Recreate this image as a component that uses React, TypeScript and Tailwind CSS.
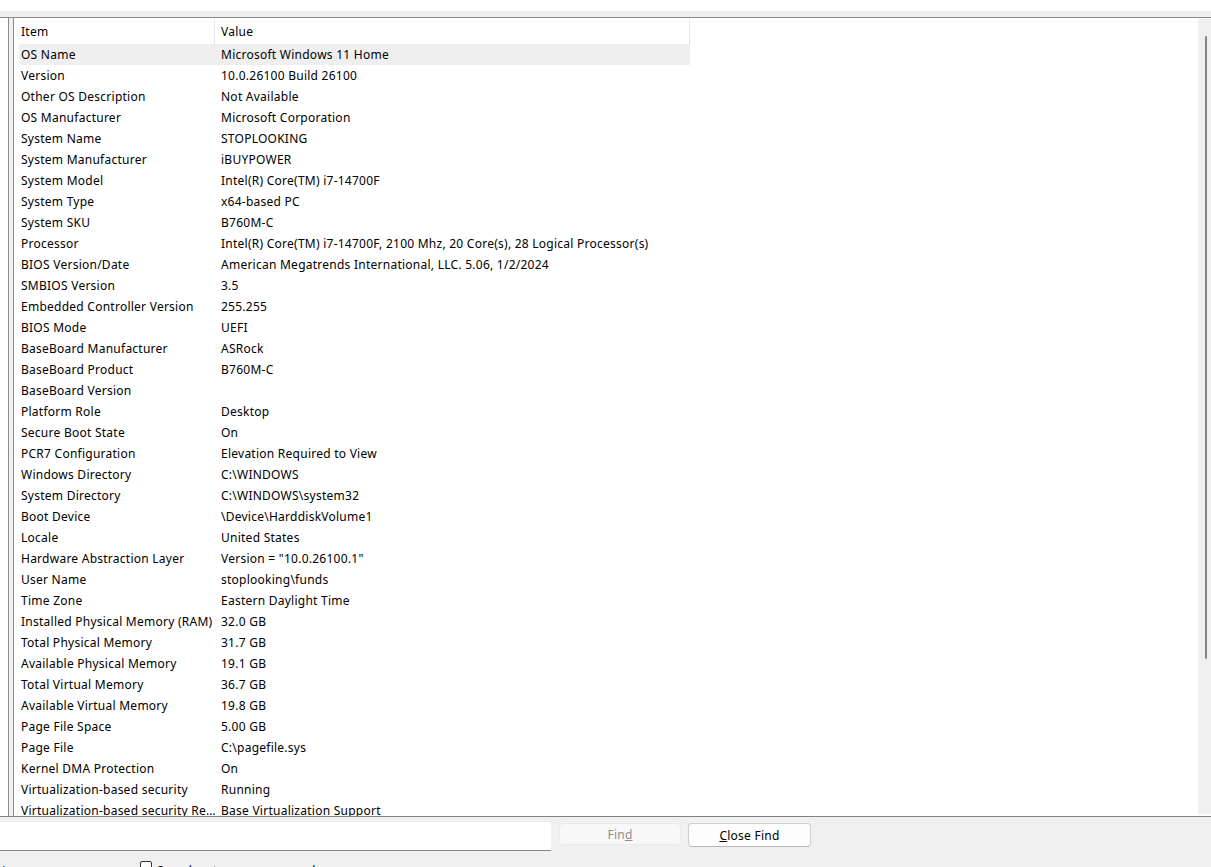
import React from "react";

const rows: [string, string][] = [
  ["OS Name", "Microsoft Windows 11 Home"],
  ["Version", "10.0.26100 Build 26100"],
  ["Other OS Description", "Not Available"],
  ["OS Manufacturer", "Microsoft Corporation"],
  ["System Name", "STOPLOOKING"],
  ["System Manufacturer", "iBUYPOWER"],
  ["System Model", "Intel(R) Core(TM) i7-14700F"],
  ["System Type", "x64-based PC"],
  ["System SKU", "B760M-C"],
  ["Processor", "Intel(R) Core(TM) i7-14700F, 2100 Mhz, 20 Core(s), 28 Logical Processor(s)"],
  ["BIOS Version/Date", "American Megatrends International, LLC. 5.06, 1/2/2024"],
  ["SMBIOS Version", "3.5"],
  ["Embedded Controller Version", "255.255"],
  ["BIOS Mode", "UEFI"],
  ["BaseBoard Manufacturer", "ASRock"],
  ["BaseBoard Product", "B760M-C"],
  ["BaseBoard Version", ""],
  ["Platform Role", "Desktop"],
  ["Secure Boot State", "On"],
  ["PCR7 Configuration", "Elevation Required to View"],
  ["Windows Directory", "C:\\WINDOWS"],
  ["System Directory", "C:\\WINDOWS\\system32"],
  ["Boot Device", "\\Device\\HarddiskVolume1"],
  ["Locale", "United States"],
  ["Hardware Abstraction Layer", 'Version = "10.0.26100.1"'],
  ["User Name", "stoplooking\\funds"],
  ["Time Zone", "Eastern Daylight Time"],
  ["Installed Physical Memory (RAM)", "32.0 GB"],
  ["Total Physical Memory", "31.7 GB"],
  ["Available Physical Memory", "19.1 GB"],
  ["Total Virtual Memory", "36.7 GB"],
  ["Available Virtual Memory", "19.8 GB"],
  ["Page File Space", "5.00 GB"],
  ["Page File", "C:\\pagefile.sys"],
  ["Kernel DMA Protection", "On"],
  ["Virtualization-based security", "Running"],
  ["Virtualization-based security Re…", "Base Virtualization Support"],
];

export default function App() {
  return (
    <div
      className="w-[1211px] h-[867px] bg-[#f0f0f0] flex flex-col overflow-hidden text-[12px] tracking-[0.25px] text-black"
      style={{ fontFamily: '"Noto Sans", "Open Sans", sans-serif' }}
    >
      <div className="h-[11px] bg-white shrink-0" />
      <div className="h-[6px] shrink-0" />
      <div className="h-[799px] shrink-0 flex border-t border-[#8a8a8a]">
        <div className="w-[9px] bg-white border-r border-[#8a8a8a]" />
        <div className="w-[4px]" />
        <div className="flex-1 flex bg-white border-l border-[#8a8a8a] min-w-0">
          <div className="flex-1 pl-[5px] pt-px overflow-hidden min-w-0">
            <div className="flex h-[25px] w-[671px] items-center">
              <div className="w-[196px] h-full flex items-center pl-[2px] border-r border-[#e5e5e5]">Item</div>
              <div className="flex-1 h-full flex items-center pl-[6px] border-r border-[#e5e5e5]">Value</div>
            </div>
            {rows.map(([k, v], i) => (
              <div
                key={i}
                className={
                  "flex h-[21px] w-[671px] items-center whitespace-nowrap " +
                  (i === 0 ? "bg-[#efefef]" : "")
                }
              >
                <div className="w-[196px] pl-[2px] overflow-hidden">{k}</div>
                <div className="flex-1 pl-[6px]">{v}</div>
              </div>
            ))}
          </div>
          <div className="w-[13px] bg-[#f0f0f0] mt-px mb-[2px] pt-[17px] flex justify-center pl-[2px]">
            <div className="w-[2px] h-[623px] bg-[#858585] rounded-full" />
          </div>
        </div>
      </div>
      <div className="flex-1 border-t border-[#7c8389] flex flex-col">
        <div className="flex items-start pt-[5px]">
          <div className="w-[551px] h-[29px] bg-white border-b border-[#868686] rounded-tr-[3px]" />
          <div className="ml-[8px] mt-px w-[122px] h-[22px] rounded-[4px] bg-[#f8f8f8] border border-[#ebebeb] flex items-center justify-center text-[#8d8d8d] pt-[2px]">
            <span>
              Fin<span className="underline">d</span>
            </span>
          </div>
          <div className="ml-[7px] mt-px w-[123px] h-[24px] rounded-[4px] bg-[#fdfdfd] border border-[#cfcfcf] border-b-[#b8b8b8] flex items-center justify-center pt-[1px]">
            <span>
              <span className="underline">C</span>lose Find
            </span>
          </div>
        </div>
        <div className="flex items-start mt-[10px] whitespace-nowrap">
          <div className="w-[12px] overflow-hidden flex justify-end pt-[2px]">
            <span className="shrink-0">Search selected category only</span>
          </div>
          <div className="ml-[128px] w-[12px] h-[12px] border border-[#333] rounded-[2px] bg-white shrink-0" />
          <span className="ml-[5px] mt-[1px]">Search category names only</span>
        </div>
      </div>
    </div>
  );
}
